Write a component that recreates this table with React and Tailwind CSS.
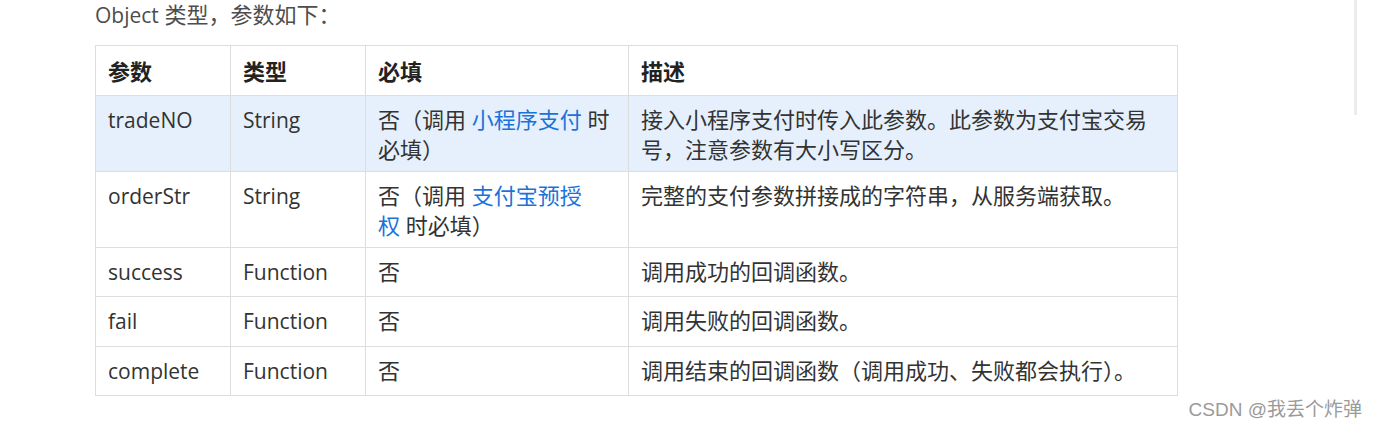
export default function App() {
    const link = "text-[#1a73d9]";
    const rows = [
        {
            name: "tradeNO",
            type: "String",
            req: <>否（调用 <span className={link}>小程序支付</span> 时<br />必填）</>,
            desc: <>接入小程序支付时传入此参数。此参数为支付宝交易<br />号，注意参数有大小写区分。</>,
            h: "h-[76px]",
            hl: true
        },
        {
            name: "orderStr",
            type: "String",
            req: <>否（调用 <span className={link}>支付宝预授<br />权</span> 时必填）</>,
            desc: "完整的支付参数拼接成的字符串，从服务端获取。",
            h: "h-[76px]"
        },
        { name: "success", type: "Function", req: "否", desc: "调用成功的回调函数。", h: "h-[49px]" },
        { name: "fail", type: "Function", req: "否", desc: "调用失败的回调函数。", h: "h-[50px]" },
        { name: "complete", type: "Function", req: "否", desc: "调用结束的回调函数（调用成功、失败都会执行）。", h: "h-[49px]" }
    ];

    const head = "border border-[#dddddd] px-[12px] align-middle text-left font-bold text-[#222222]";
    const cell = "border border-[#dddddd] px-[12px] pt-[8px] align-top text-left";

    return (
        <div className="relative w-[1377px] h-[428px] overflow-hidden bg-white text-[#333333] font-['Open_Sans','Noto_Sans_CJK_SC',sans-serif] text-[22px] leading-[30px]">
            <div className="pl-[95px]">
                <p className="text-[#4d4d4d] leading-[28px]"><span className="text-[21px]">Object</span> 类型，参数如下：</p>
                <table className="mt-[16px] border-collapse table-fixed w-[1082px]">
                    <colgroup>
                        <col className="w-[135px]" />
                        <col className="w-[135px]" />
                        <col className="w-[263px]" />
                        <col className="w-[549px]" />
                    </colgroup>
                    <thead>
                        <tr className="h-[50px]">
                            <th className={head}>参数</th>
                            <th className={head}>类型</th>
                            <th className={head}>必填</th>
                            <th className={head}>描述</th>
                        </tr>
                    </thead>
                    <tbody>
                        {rows.map((r) => (
                            <tr key={r.name} className={`${r.h} ${r.hl ? "bg-[#e6f0fc]" : ""}`}>
                                <td className={cell}><span className="text-[21px]">{r.name}</span></td>
                                <td className={cell}><span className="text-[21px]">{r.type}</span></td>
                                <td className={cell}>{r.req}</td>
                                <td className={cell}>{r.desc}</td>
                            </tr>
                        ))}
                    </tbody>
                </table>
            </div>
            <div className="absolute right-[15px] bottom-[6px] text-[19px] leading-[24px] text-[#9a9a9a] font-['Liberation_Sans','Noto_Sans_CJK_SC',sans-serif]">CSDN @我丢个炸弹</div>
            <div className="absolute left-[1354px] top-0 w-[3px] h-[115px] bg-[#ececec]" />
        </div>
    );
}
